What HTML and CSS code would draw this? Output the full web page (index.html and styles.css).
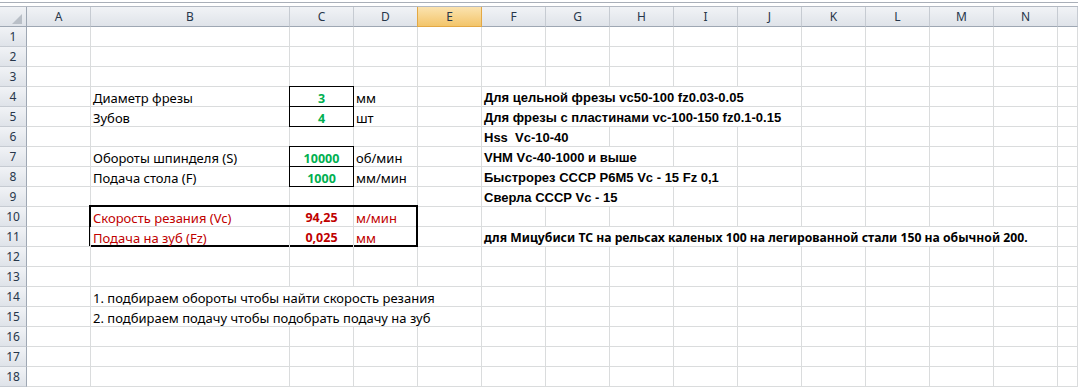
FILE: index.html
```html
<!DOCTYPE html>
<html lang="ru">
<head>
<meta charset="utf-8">
<title>Расчёт режимов резания</title>
<link rel="stylesheet" href="styles.css">
</head>
<body>
<div class="top"><div class="bar"></div></div>
<div class="sheet">
  <!-- header row -->
  <div class="corner"><svg width="26" height="19" viewBox="0 0 26 19"><polygon points="12,17 22,7 22,17" fill="#b9bfc7"/></svg></div>
  <div class="h">A</div><div class="h">B</div><div class="h">C</div><div class="h">D</div><div class="h sel">E</div><div class="h">F</div><div class="h">G</div><div class="h">H</div><div class="h">I</div><div class="h">J</div><div class="h">K</div><div class="h">L</div><div class="h">M</div><div class="h">N</div><div class="h"></div>

  <!-- 1 -->
  <div class="rh">1</div><div class="c"></div><div class="c"></div><div class="c"></div><div class="c"></div><div class="c"></div><div class="c"></div><div class="c"></div><div class="c"></div><div class="c"></div><div class="c"></div><div class="c"></div><div class="c"></div><div class="c"></div><div class="c"></div><div class="c"></div>
  <!-- 2 -->
  <div class="rh">2</div><div class="c"></div><div class="c"></div><div class="c"></div><div class="c"></div><div class="c"></div><div class="c"></div><div class="c"></div><div class="c"></div><div class="c"></div><div class="c"></div><div class="c"></div><div class="c"></div><div class="c"></div><div class="c"></div><div class="c"></div>
  <!-- 3 -->
  <div class="rh">3</div><div class="c"></div><div class="c"></div><div class="c"></div><div class="c"></div><div class="c"></div><div class="c"></div><div class="c"></div><div class="c"></div><div class="c"></div><div class="c"></div><div class="c"></div><div class="c"></div><div class="c"></div><div class="c"></div><div class="c"></div>
  <!-- 4 -->
  <div class="rh">4</div><div class="c"></div><div class="c">Диаметр фрезы</div><div class="c inp">3</div><div class="c">мм</div><div class="c"></div><div class="c note s5">Для цельной фрезы vc50-100 fz0.03-0.05</div><div class="c"></div><div class="c"></div><div class="c"></div><div class="c"></div><div class="c"></div>
  <!-- 5 -->
  <div class="rh">5</div><div class="c"></div><div class="c">Зубов</div><div class="c inp">4</div><div class="c">шт</div><div class="c"></div><div class="c note s5">Для фрезы с пластинами vc-100-150 fz0.1-0.15</div><div class="c"></div><div class="c"></div><div class="c"></div><div class="c"></div><div class="c"></div>
  <!-- 6 -->
  <div class="rh">6</div><div class="c"></div><div class="c"></div><div class="c"></div><div class="c"></div><div class="c"></div><div class="c note s2">Hss&nbsp; Vc-10-40</div><div class="c"></div><div class="c"></div><div class="c"></div><div class="c"></div><div class="c"></div><div class="c"></div><div class="c"></div><div class="c"></div>
  <!-- 7 -->
  <div class="rh">7</div><div class="c"></div><div class="c">Обороты шпинделя (S)</div><div class="c inp">10000</div><div class="c">об/мин</div><div class="c"></div><div class="c note s3">VHM Vc-40-1000 и выше</div><div class="c"></div><div class="c"></div><div class="c"></div><div class="c"></div><div class="c"></div><div class="c"></div><div class="c"></div>
  <!-- 8 -->
  <div class="rh">8</div><div class="c"></div><div class="c">Подача стола (F)</div><div class="c inp">1000</div><div class="c">мм/мин</div><div class="c"></div><div class="c note s4">Быстрорез СССР Р6М5 Vc - 15 Fz 0,1</div><div class="c"></div><div class="c"></div><div class="c"></div><div class="c"></div><div class="c"></div><div class="c"></div>
  <!-- 9 -->
  <div class="rh">9</div><div class="c"></div><div class="c"></div><div class="c"></div><div class="c"></div><div class="c"></div><div class="c note s3">Сверла СССР Vc - 15</div><div class="c"></div><div class="c"></div><div class="c"></div><div class="c"></div><div class="c"></div><div class="c"></div><div class="c"></div>
  <!-- 10 -->
  <div class="rh">10</div><div class="c"></div>
  <div class="result">
    <div class="c red">Скорость резания (Vc)</div><div class="c red num">94,25</div><div class="c red last">м/мин</div>
    <div class="c red bot">Подача на зуб (Fz)</div><div class="c red num bot">0,025</div><div class="c red last bot">мм</div>
  </div>
  <div class="c"></div><div class="c"></div><div class="c"></div><div class="c"></div><div class="c"></div><div class="c"></div><div class="c"></div><div class="c"></div><div class="c"></div><div class="c"></div><div class="c"></div>
  <!-- 11 -->
  <div class="rh">11</div><div class="c"></div><div class="c"></div><div class="c cal s9">для Мицубиси ТС на рельсах каленых 100 на легированной стали 150 на обычной 200.</div><div class="c"></div>
  <!-- 12 -->
  <div class="rh">12</div><div class="c"></div><div class="c"></div><div class="c"></div><div class="c"></div><div class="c"></div><div class="c"></div><div class="c"></div><div class="c"></div><div class="c"></div><div class="c"></div><div class="c"></div><div class="c"></div><div class="c"></div><div class="c"></div><div class="c"></div>
  <!-- 13 -->
  <div class="rh">13</div><div class="c"></div><div class="c"></div><div class="c"></div><div class="c"></div><div class="c"></div><div class="c"></div><div class="c"></div><div class="c"></div><div class="c"></div><div class="c"></div><div class="c"></div><div class="c"></div><div class="c"></div><div class="c"></div><div class="c"></div>
  <!-- 14 -->
  <div class="rh">14</div><div class="c"></div><div class="c s4">1. подбираем обороты чтобы найти скорость резания</div><div class="c"></div><div class="c"></div><div class="c"></div><div class="c"></div><div class="c"></div><div class="c"></div><div class="c"></div><div class="c"></div><div class="c"></div><div class="c"></div>
  <!-- 15 -->
  <div class="rh">15</div><div class="c"></div><div class="c s4">2. подбираем подачу чтобы подобрать подачу на зуб</div><div class="c"></div><div class="c"></div><div class="c"></div><div class="c"></div><div class="c"></div><div class="c"></div><div class="c"></div><div class="c"></div><div class="c"></div><div class="c"></div>
  <!-- 16 -->
  <div class="rh">16</div><div class="c"></div><div class="c"></div><div class="c"></div><div class="c"></div><div class="c"></div><div class="c"></div><div class="c"></div><div class="c"></div><div class="c"></div><div class="c"></div><div class="c"></div><div class="c"></div><div class="c"></div><div class="c"></div><div class="c"></div>
  <!-- 17 -->
  <div class="rh">17</div><div class="c"></div><div class="c"></div><div class="c"></div><div class="c"></div><div class="c"></div><div class="c"></div><div class="c"></div><div class="c"></div><div class="c"></div><div class="c"></div><div class="c"></div><div class="c"></div><div class="c"></div><div class="c"></div><div class="c"></div>
  <!-- 18 -->
  <div class="rh">18</div><div class="c"></div><div class="c"></div><div class="c"></div><div class="c"></div><div class="c"></div><div class="c"></div><div class="c"></div><div class="c"></div><div class="c"></div><div class="c"></div><div class="c"></div><div class="c"></div><div class="c"></div><div class="c"></div><div class="c"></div>
</div>
</body>
</html>
```

FILE: styles.css
```css
html, body {
  margin: 0;
  padding: 0;
}
body {
  width: 1078px;
  height: 387px;
  overflow: hidden;
  background: #ffffff;
  font-family: "Noto Sans", "Liberation Sans", sans-serif;
}

.top {
  height: 7px;
  box-sizing: border-box;
  padding-top: 2px;
  background: #ffffff;
}
.top .bar {
  height: 5px;
  box-sizing: border-box;
  border-top: 1px solid #a9afb8;
  border-bottom: 1px solid #b3b9c2;
}

.sheet {
  display: grid;
  grid-template-columns: 27px 64px 199px repeat(12, 64px) 1fr;
  grid-auto-rows: 20px;
}

/* headers */
.corner,
.h,
.rh {
  box-sizing: border-box;
  background: linear-gradient(#f1f3f6, #dfe3e9);
  color: #27364a;
  font-size: 12px;
  text-align: center;
  white-space: nowrap;
}
.corner {
  border-right: 1px solid #9ea7b3;
  border-bottom: 1px solid #9ea7b3;
}
.corner svg {
  display: block;
}
.h {
  border-right: 1px solid #c6cbd2;
  border-bottom: 1px solid #9ea7b3;
  line-height: 19px;
}
.h.sel {
  background: linear-gradient(#fbe3b0, #f3c56a);
  border-right-color: #e3a844;
  border-bottom-color: #e3a844;
  box-shadow: -1px 0 0 #e3a844;
}
.rh {
  border-right: 1px solid #9ea7b3;
  border-bottom: 1px solid #c6cbd2;
  line-height: 19px;
}

/* cells */
.c {
  box-sizing: border-box;
  border-right: 1px solid #dadcdd;
  border-bottom: 1px solid #dadcdd;
  padding: 2px 0 0 2px;
  font-size: 13px;
  line-height: 18px;
  color: #000000;
  white-space: nowrap;
  min-width: 0;
}

.s2 { grid-column: span 2; }
.s3 { grid-column: span 3; }
.s4 { grid-column: span 4; }
.s5 { grid-column: span 5; }
.s9 { grid-column: span 9; }

.note {
  font-family: "Liberation Sans", Arial, sans-serif;
  font-weight: bold;
  font-size: 13px;
}
.cal {
  font-weight: bold;
  font-size: 12.2px;
}

.inp {
  position: relative;
  margin: -1px 0 0 -1px;
  border: 1px solid #000000;
  padding: 3px 0 0 0;
  text-align: center;
  font-weight: bold;
  font-size: 12.5px;
  color: #00b050;
}

/* result block (rows 10-11, columns B-D) */
.result {
  grid-column: span 3;
  grid-row: span 2;
  margin: -2px 0 0 -2px;
  border: 2px solid #000000;
  box-sizing: border-box;
  display: grid;
  grid-template-columns: 199px 64px 1fr;
  grid-template-rows: 20px 1fr;
  background: #ffffff;
}
.red {
  color: #c00000;
}
.num {
  text-align: center;
  font-weight: bold;
  font-size: 12.5px;
  padding-left: 0;
}
.last {
  border-right: 0;
}
.bot {
  border-bottom: 0;
}
```
